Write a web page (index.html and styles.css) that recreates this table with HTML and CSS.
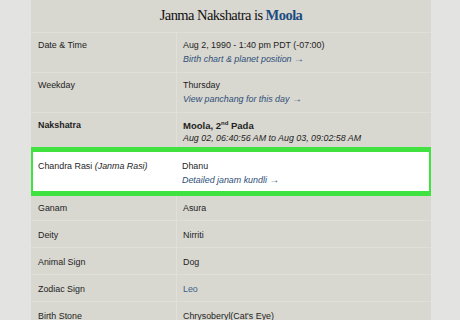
FILE: index.html
```html
<!DOCTYPE html>
<html>
<head>
<meta charset="utf-8">
<link rel="stylesheet" href="styles.css">
</head>
<body>
<div class="panel">
  <div class="title">Janma Nakshatra is <span class="moola">Moola</span></div>
  <div class="row double">
    <div class="key">Date &amp; Time</div>
    <div class="val"><div>Aug 2, 1990 - 1:40 pm PDT (-07:00)</div><div class="link">Birth chart &amp; planet position <span class="arr">→</span></div></div>
  </div>
  <div class="row double">
    <div class="key">Weekday</div>
    <div class="val"><div>Thursday</div><div class="link">View panchang for this day <span class="arr">→</span></div></div>
  </div>
  <div class="row double">
    <div class="key bold">Nakshatra</div>
    <div class="val"><div class="bold big">Moola, 2<sup>nd</sup> Pada</div><div class="ital">Aug 02, 06:40:56 AM to Aug 03, 09:02:58 AM</div></div>
  </div>
  <div class="row double hl">
    <div class="key">Chandra Rasi <i>(Janma Rasi)</i></div>
    <div class="val"><div>Dhanu</div><div class="link">Detailed janam kundli <span class="arr">→</span></div></div>
  </div>
  <div class="row"><div class="key">Ganam</div><div class="val">Asura</div></div>
  <div class="row"><div class="key">Deity</div><div class="val">Nirriti</div></div>
  <div class="row"><div class="key">Animal Sign</div><div class="val">Dog</div></div>
  <div class="row"><div class="key">Zodiac Sign</div><div class="val blue">Leo</div></div>
  <div class="row"><div class="key">Birth Stone</div><div class="val">Chrysoberyl(Cat's Eye)</div></div>
</div>
</body>
</html>
```
FILE: styles.css
```css
html, body {
  margin: 0;
  padding: 0;
  background: #e3e3e1;
  height: 320px;
  overflow: hidden;
}
.panel {
  margin-left: 31px;
  width: 400px;
  height: 320px;
  overflow: hidden;
  background: #d8d7d0;
  font-family: "Liberation Sans", Arial, sans-serif;
  font-size: 8.9px;
  color: #1e1e1e;
}
.title {
  height: 32px;
  box-sizing: border-box;
  padding-top: 6px;
  text-align: center;
  font-family: "Liberation Serif", "Times New Roman", serif;
  font-size: 14.5px;
  letter-spacing: -0.55px;
  line-height: 18px;
  color: #111;
}
.moola {
  color: #1c4c82;
  font-weight: bold;
}
.row {
  display: grid;
  grid-template-columns: 145px 1fr;
  border-top: 1px solid #e0dfd8;
  height: 27px;
  box-sizing: border-box;
  line-height: 11px;
}
.row.double {
  height: 40px;
}
.key {
  padding: 9px 7px 0 7px;
}
.val {
  border-left: 1px solid #e0dfd8;
  padding: 9px 6px 0 6px;
}
.double .key, .double .val {
  padding-top: 7px;
}
.val .link, .val .ital {
  margin-top: 2px;
}
.link {
  color: #2d4f78;
  font-style: italic;
}
.arr {
  font-style: normal;
  font-size: 10px;
}
.ital {
  font-style: italic;
}
.bold {
  font-weight: bold;
}
.big {
  font-size: 9.5px;
}
sup {
  font-size: 6px;
  line-height: 0;
  vertical-align: 4px;
}
.blue {
  color: #3a5f8c;
}
.row.hl {
  position: relative;
  background: #ffffff;
  height: 43px;
  margin-top: -2px;
  border-top: none;
  outline: 5px solid #3fe23f;
  outline-offset: -2px;
}
.row.hl .key, .row.hl .val {
  padding-top: 11px;
  border-left: none;
}
```
